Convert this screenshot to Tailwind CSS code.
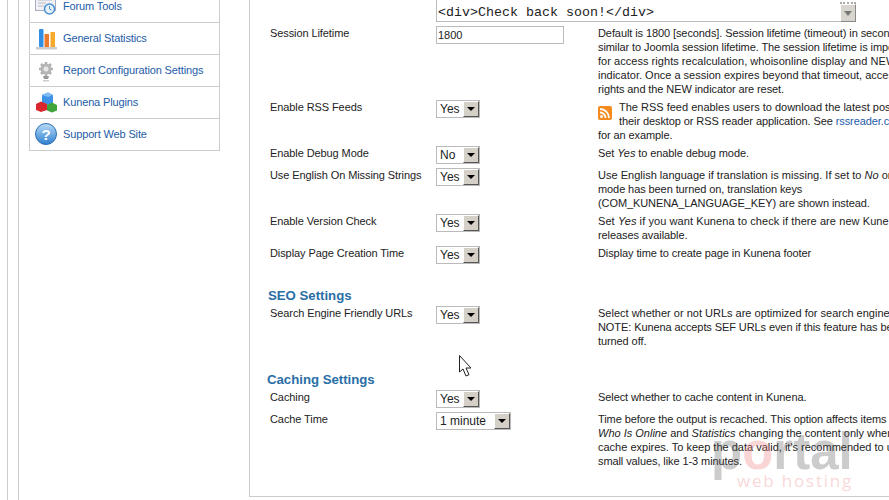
<!DOCTYPE html>
<html lang="en">
<head>
  <meta charset="UTF-8">
  <title>Kunena Configuration</title>
  <script src="https://cdn.jsdelivr.net/npm/@tailwindcss/browser@4"></script>
</head>
<body class="bg-white h-[500px] w-[889px] overflow-hidden relative font-['Liberation_Sans',Arial,sans-serif] text-[11px] leading-[14px] tracking-[-0.09px] text-[#222]">

  <div class="flex h-[500px]">
    <!-- sidebar with its two guide lines -->
    <div class="w-[249px] shrink-0 pl-[7px] flex">
      <div class="border-l border-[#ccc] pl-[10px] h-[500px]">
        <div class="border-l border-[#ccc] pl-[10px] h-[500px] flow-root">
          <div class="w-[191px] border border-t-0 border-[#ccc] -mt-[9px] text-[#1d5ca8] tracking-[-0.14px]">
            <div class="h-[32px] border-b border-[#ccc] flex items-center pb-[1px] pl-[4px] gap-[5px]">
              <svg class="w-[24px] h-[24px]" viewBox="0 0 24 24"><rect x="1.500" y="2" width="20" height="14.500" fill="#f1f1f5" stroke="#a9adc4"/><path d="M4 6h14M4 9h8M4 12h6" stroke="#b9bbc6"/><circle cx="15.500" cy="15" r="5" fill="#e8f2fb" stroke="#4a8fd0" stroke-width="1.500"/><path d="M15.500 12v3l2 1" stroke="#4a8fd0" fill="none"/></svg>
              <span>Forum Tools</span>
            </div>
            <div class="h-[32px] border-b border-[#ccc] flex items-center pb-[1px] pl-[4px] gap-[5px]">
              <svg class="w-[24px] h-[24px]" viewBox="0 0 24 24"><path d="M2 21h21v2.500H2z" fill="#ccc"/><rect x="5" y="3" width="4.500" height="18" rx="1" fill="#2e8fe4"/><rect x="10.500" y="8" width="4.500" height="13" fill="#ea7a2c"/><rect x="16.500" y="6" width="4.500" height="15" fill="#f7a92b"/></svg>
              <span>General Statistics</span>
            </div>
            <div class="h-[32px] border-b border-[#ccc] flex items-center pb-[1px] pl-[4px] gap-[5px]">
              <svg class="w-[24px] h-[24px]" viewBox="0 0 24 24"><path d="M12 4v14M5 11h14M7 6l10 10M17 6L7 16" stroke="#b0b0b0" stroke-width="2.500"/><circle cx="12" cy="11" r="5.500" fill="#b5b5b5"/><circle cx="12" cy="11" r="2.500" fill="#e8e8e8"/><path d="M9 18h6l-1 3h-4z" fill="#999"/><path d="M9 22h6v1.500H9z" fill="#ccc"/></svg>
              <span>Report Configuration Settings</span>
            </div>
            <div class="h-[32px] border-b border-[#ccc] flex items-center pb-[1px] pl-[4px] gap-[5px]">
              <svg class="w-[24px] h-[24px]" viewBox="0 0 24 24"><path d="M8 5l6-2.500L19 5v8l-5 2-6-2z" fill="#3f93e6"/><path d="M8 5l6 2 5-2-5-2.500z" fill="#7fbcf3"/><path d="M2 14l5-2.500 6 2.500v6l-6 2-5-2z" fill="#d9262c"/><path d="M13 15l5-2.500 5 2.500v5.500l-5 2-5-2z" fill="#3fa53a"/></svg>
              <span>Kunena Plugins</span>
            </div>
            <div class="h-[31px] flex items-center pb-[1px] pl-[4px] gap-[5px]">
              <svg class="w-[24px] h-[24px]" viewBox="0 0 24 24"><defs><linearGradient id="q" x1="0" y1="0" x2="0" y2="1"><stop offset="0" stop-color="#b9dcf7"/><stop offset="1" stop-color="#2f7fd0"/></linearGradient></defs><circle cx="12" cy="12" r="10.500" fill="url(#q)" stroke="#2a6fb5"/><text x="12" y="17.500" text-anchor="middle" font-size="15" font-weight="bold" fill="#fff" font-family="Liberation Sans">?</text></svg>
              <span>Support Web Site</span>
            </div>
          </div>
        </div>
      </div>
    </div>

    <!-- main panel -->
    <div class="flex-1 min-w-0 overflow-hidden border-l border-b border-[#ccc] h-[497px]">
      <div class="w-[760px] pl-[20px]">
        <div class="flex pl-[166px] h-[24px]">
          <div class="w-[420px] h-[22px] flex items-start">
            <div class="w-[404px] h-[22px] border-l border-b border-[#bbb] pl-[1px] pt-[5px] font-['Liberation_Mono',monospace] text-[13.33px] leading-[15px] tracking-normal">&lt;div&gt;Check back soon!&lt;/div&gt;</div>
            <div class="w-[16px] h-[20px] mt-[2px] border-t-2 border-dotted border-[#aaa]">
              <div class="h-[18px] bg-[#d8d5ce] border border-t-white border-l-white border-r-[#888] border-b-[#888] flex items-center justify-center"><span class="border-x-[4px] border-t-[5px] border-x-transparent border-t-[#777]"></span></div>
            </div>
          </div>
        </div>

        <div class="grid grid-cols-[166px_162px_1fr] py-[2px] h-[74px]">
          <div>Session Lifetime</div>
          <div><input value="1800" class="w-[128px] h-[18px] border border-[#bbb] px-[1px] text-[11px] block tracking-normal"></div>
          <div class="whitespace-nowrap">Default is 1800 [seconds]. Session lifetime (timeout) in seconds is<br>similar to Joomla session lifetime. The session lifetime is important<br><span class="tracking-[0.04px]">for access rights recalculation, whoisonline display and NEW post</span><br><span class="tracking-normal">indicator. Once a session expires beyond that timeout, access</span><br>rights and the NEW indicator are reset.</div>
        </div>

        <div class="grid grid-cols-[166px_162px_1fr] py-[2px] h-[46px]">
          <div>Enable RSS Feeds</div>
          <div class="flex w-[44px] h-[18px] border border-[#bbb] text-[12px] tracking-normal pl-[3px] items-center justify-between">Yes<span class="w-[16px] h-[16px] bg-[#d4d0c8] border border-t-white border-l-white border-r-[#555] border-b-[#555] flex items-center justify-center"><span class="border-x-[4px] border-t-[4px] border-x-transparent border-t-black"></span></span></div>
          <div class="whitespace-nowrap">
            <svg class="float-left mt-[6px] mr-[7px] w-[14px] h-[14px]" viewBox="0 0 14 14"><rect width="14" height="14" rx="2" fill="#f58a1f"/><circle cx="3.500" cy="10.500" r="1.500" fill="#fff"/><path d="M2 6.500a5.500 5.500 0 0 1 5.500 5.500M2 3a9 9 0 0 1 9 9" stroke="#fff" stroke-width="1.800" fill="none"/></svg>
            <span class="tracking-normal">The RSS feed enables users to download the latest posts to</span><br>their desktop or RSS reader application. See <span class="text-[#1d5ca8]">rssreader.com</span><br>for an example.
          </div>
        </div>

        <div class="grid grid-cols-[166px_162px_1fr] py-[2px] h-[22px]">
          <div>Enable Debug Mode</div>
          <div class="flex w-[44px] h-[18px] border border-[#bbb] text-[12px] tracking-normal pl-[3px] items-center justify-between">No<span class="w-[16px] h-[16px] bg-[#d4d0c8] border border-t-white border-l-white border-r-[#555] border-b-[#555] flex items-center justify-center"><span class="border-x-[4px] border-t-[4px] border-x-transparent border-t-black"></span></span></div>
          <div>Set <i>Yes</i> to enable debug mode.</div>
        </div>

        <div class="grid grid-cols-[166px_162px_1fr] py-[2px] h-[46px]">
          <div>Use English On Missing Strings</div>
          <div class="flex w-[44px] h-[18px] border border-[#bbb] text-[12px] tracking-normal pl-[3px] items-center justify-between">Yes<span class="w-[16px] h-[16px] bg-[#d4d0c8] border border-t-white border-l-white border-r-[#555] border-b-[#555] flex items-center justify-center"><span class="border-x-[4px] border-t-[4px] border-x-transparent border-t-black"></span></span></div>
          <div class="whitespace-nowrap"><span class="tracking-[0.01px]">Use English language if translation is missing. If set to <i>No</i> or debug</span><br>mode has been turned on, translation keys<br>(COM_KUNENA_LANGUAGE_KEY) are shown instead.</div>
        </div>

        <div class="grid grid-cols-[166px_162px_1fr] py-[2px] h-[32px]">
          <div>Enable Version Check</div>
          <div class="flex w-[44px] h-[18px] border border-[#bbb] text-[12px] tracking-normal pl-[3px] items-center justify-between">Yes<span class="w-[16px] h-[16px] bg-[#d4d0c8] border border-t-white border-l-white border-r-[#555] border-b-[#555] flex items-center justify-center"><span class="border-x-[4px] border-t-[4px] border-x-transparent border-t-black"></span></span></div>
          <div class="whitespace-nowrap"><span class="tracking-[0.08px]">Set <i>Yes</i> if you want Kunena to check if there are new Kunena</span><br>releases available.</div>
        </div>

        <div class="grid grid-cols-[166px_162px_1fr] py-[2px] h-[22px]">
          <div>Display Page Creation Time</div>
          <div class="flex w-[44px] h-[18px] border border-[#bbb] text-[12px] tracking-normal pl-[3px] items-center justify-between">Yes<span class="w-[16px] h-[16px] bg-[#d4d0c8] border border-t-white border-l-white border-r-[#555] border-b-[#555] flex items-center justify-center"><span class="border-x-[4px] border-t-[4px] border-x-transparent border-t-black"></span></span></div>
          <div>Display time to create page in Kunena footer</div>
        </div>

        <h2 class="h-[38px] pt-[22px] -ml-[2px] text-[13.2px] leading-[16px] font-bold tracking-normal text-[#2a6ea6]">SEO Settings</h2>

        <div class="grid grid-cols-[166px_162px_1fr] py-[2px] h-[46px]">
          <div>Search Engine Friendly URLs</div>
          <div class="flex w-[44px] h-[18px] border border-[#bbb] text-[12px] tracking-normal pl-[3px] items-center justify-between">Yes<span class="w-[16px] h-[16px] bg-[#d4d0c8] border border-t-white border-l-white border-r-[#555] border-b-[#555] flex items-center justify-center"><span class="border-x-[4px] border-t-[4px] border-x-transparent border-t-black"></span></span></div>
          <div class="whitespace-nowrap"><span class="tracking-normal">Select whether or not URLs are optimized for search engines.</span><br>NOTE: Kunena accepts SEF URLs even if this feature has been<br>turned off.</div>
        </div>

        <h2 class="h-[38px] pt-[22px] -ml-[3px] text-[13.2px] leading-[16px] font-bold tracking-normal text-[#2a6ea6]">Caching Settings</h2>

        <div class="grid grid-cols-[166px_162px_1fr] py-[2px] h-[22px]">
          <div>Caching</div>
          <div class="flex w-[44px] h-[18px] border border-[#bbb] text-[12px] tracking-normal pl-[3px] items-center justify-between">Yes<span class="w-[16px] h-[16px] bg-[#d4d0c8] border border-t-white border-l-white border-r-[#555] border-b-[#555] flex items-center justify-center"><span class="border-x-[4px] border-t-[4px] border-x-transparent border-t-black"></span></span></div>
          <div>Select whether to cache content in Kunena.</div>
        </div>

        <div class="grid grid-cols-[166px_162px_1fr] py-[2px]">
          <div>Cache Time</div>
          <div class="flex w-[75px] h-[18px] border border-[#bbb] text-[12px] tracking-normal pl-[3px] items-center justify-between">1 minute<span class="w-[16px] h-[16px] bg-[#d4d0c8] border border-t-white border-l-white border-r-[#555] border-b-[#555] flex items-center justify-center"><span class="border-x-[4px] border-t-[4px] border-x-transparent border-t-black"></span></span></div>
          <div class="whitespace-nowrap">Time before the output is recached. This option affects items such as<br><span class="tracking-normal"><i>Who Is Online</i> and <i>Statistics</i> changing the content only when the</span><br><span class="tracking-normal">cache expires. To keep the data valid, it's recommended to use</span><br>small values, like 1-3 minutes.</div>
        </div>
      </div>
    </div>
  </div>

  <!-- mouse cursor -->
  <svg class="absolute left-[457px] top-[353px] w-[18px] h-[25px]" viewBox="0 0 18 25"><path d="M2.500 2.500V19l3.500-3 3 7 3-1.300-3-6.700h5z" fill="#fff" stroke="#222"/></svg>

  <!-- watermark -->
  <div class="absolute left-[711px] top-[427px] w-[150px] pointer-events-none">
    <div class="text-[51px] leading-[50px] font-bold tracking-normal text-[#555]/30">p<span class="text-[#e88]/35">o</span>rtal</div>
    <div class="-mt-[3px] text-[17px] leading-[14px] tracking-[1.8px] pl-[26px] whitespace-nowrap font-['Open_Sans',sans-serif] text-[#f3b0b0]/50">web hosting</div>
  </div>
</body>
</html>
